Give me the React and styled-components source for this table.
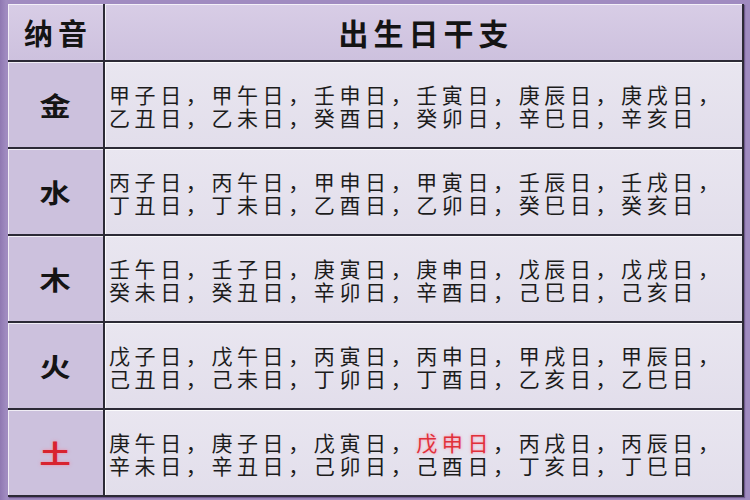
import styled, { createGlobalStyle } from 'styled-components';

const GlobalStyle = createGlobalStyle`
  html, body {
    margin: 0;
    padding: 0;
    background: #9d88bd;
  }
  body {
    font-family: "Noto Sans CJK SC", "Noto Sans", sans-serif;
  }
`;

const Page = styled.div`
  width: 750px;
  height: 500px;
  box-sizing: border-box;
  padding: 4px 8px 0 8px;
  background: linear-gradient(90deg, #8f78b2 0px, #a08bc0 6px, #a08bc0 100%);
`;

const Table = styled.div`
  width: 734px;
  display: grid;
  grid-template-columns: 95px 1fr;
  grid-template-rows: 56px repeat(5, 85px);
  gap: 2px;
  background: #2c2a36;
  border-right: 2px solid #2c2a36;
  border-bottom: 2px solid #2c2a36;
  box-shadow: 1px 1px 1px rgba(40, 20, 70, 0.4);
`;

const HeadCell = styled.div`
  display: flex;
  align-items: center;
  justify-content: center;
  background: linear-gradient(180deg, #d8cde6 0%, #cdc1de 100%);
  box-shadow: inset 1px 1px 0 rgba(255, 255, 255, 0.7);
  color: #141414;
  font-weight: 700;
  font-size: ${({ $size }) => $size}px;
  letter-spacing: ${({ $spacing }) => $spacing}px;
  padding-left: ${({ $spacing }) => $spacing}px;
`;

const LabelCell = styled.div`
  display: flex;
  align-items: center;
  justify-content: center;
  background: #ccc1dd;
  box-shadow: inset 1px 1px 0 rgba(255, 255, 255, 0.7);
`;

const Label = styled.span`
  display: inline-block;
  font-size: 26px;
  font-weight: 700;
  transform: scaleX(1.2);
  color: ${({ $red }) => ($red ? '#d8232f' : '#141414')};
  text-shadow: ${({ $red }) => ($red ? '0 0 3px rgba(255, 120, 140, 0.7)' : 'none')};
`;

const DaysCell = styled.div`
  display: flex;
  flex-direction: column;
  justify-content: center;
  padding: 2px 0 0 4px;
  background: linear-gradient(180deg, #e9e6f0 0%, #e2deeb 100%);
  box-shadow: inset 1px 1px 0 rgba(255, 255, 255, 0.85);
`;

const Line = styled.div`
  display: flex;
  height: 23px;
  font-size: 21px;
  line-height: 23px;
  letter-spacing: 4.6px;
  color: #1c1c1c;
  white-space: nowrap;
`;

const Day = styled.span`
  display: inline-block;
  height: 23px;
  line-height: 23px;
  color: ${({ $mark }) => ($mark ? '#e0303a' : 'inherit')};
  text-shadow: ${({ $mark }) => ($mark ? '0 0 3px rgba(255, 130, 150, 0.8)' : 'none')};
`;

const rows = [
  {
    label: '金',
    lines: [
      ['甲子日', '甲午日', '壬申日', '壬寅日', '庚辰日', '庚戌日'],
      ['乙丑日', '乙未日', '癸酉日', '癸卯日', '辛巳日', '辛亥日'],
    ],
  },
  {
    label: '水',
    lines: [
      ['丙子日', '丙午日', '甲申日', '甲寅日', '壬辰日', '壬戌日'],
      ['丁丑日', '丁未日', '乙酉日', '乙卯日', '癸巳日', '癸亥日'],
    ],
  },
  {
    label: '木',
    lines: [
      ['壬午日', '壬子日', '庚寅日', '庚申日', '戊辰日', '戊戌日'],
      ['癸未日', '癸丑日', '辛卯日', '辛酉日', '己巳日', '己亥日'],
    ],
  },
  {
    label: '火',
    lines: [
      ['戊子日', '戊午日', '丙寅日', '丙申日', '甲戌日', '甲辰日'],
      ['己丑日', '己未日', '丁卯日', '丁酉日', '乙亥日', '乙巳日'],
    ],
  },
  {
    label: '土',
    red: true,
    mark: '戊申日',
    lines: [
      ['庚午日', '庚子日', '戊寅日', '戊申日', '丙戌日', '丙辰日'],
      ['辛未日', '辛丑日', '己卯日', '己酉日', '丁亥日', '丁巳日'],
    ],
  },
];

const renderLine = (days, mark, trailing) =>
  days.map((d, i) => (
    <Day key={d}>
      {d === mark ? <Day $mark>{d}</Day> : d}
      {i < days.length - 1 || trailing ? '，' : ''}
    </Day>
  ));

function ElementRow({ row }) {
  return (
    <>
      <LabelCell>
        <Label $red={row.red}>{row.label}</Label>
      </LabelCell>
      <DaysCell>
        <Line>{renderLine(row.lines[0], row.mark, true)}</Line>
        <Line>{renderLine(row.lines[1], row.mark, false)}</Line>
      </DaysCell>
    </>
  );
}

export default function App() {
  return (
    <>
      <GlobalStyle />
      <Page>
        <Table>
          <HeadCell $size={29} $spacing={5}>纳音</HeadCell>
          <HeadCell $size={30} $spacing={5}>出生日干支</HeadCell>
          {rows.map((row) => (
            <ElementRow key={row.label} row={row} />
          ))}
        </Table>
      </Page>
    </>
  );
}
